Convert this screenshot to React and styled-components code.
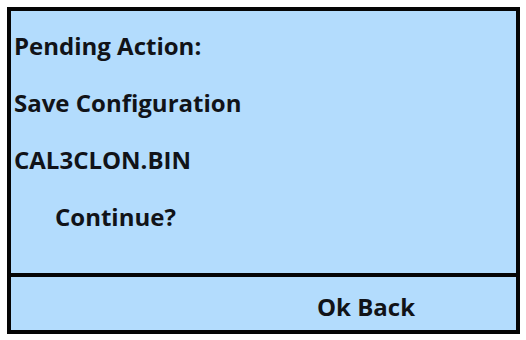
import React from 'react'
import styled, { createGlobalStyle } from 'styled-components'

const GlobalStyle = createGlobalStyle`
  html, body {
    margin: 0;
    padding: 0;
    background: #ffffff;
  }
  body {
    font-family: "Open Sans", Lato, sans-serif;
  }
`

const Page = styled.div`
  padding: 7px 6px 6px 7px;
`

const Screen = styled.div`
  width: 505px;
  border: 4px solid #050505;
  background: #b3dcfd;
  display: flex;
  flex-direction: column;
`

const Body = styled.div`
  height: 262px;
  padding: 19px 0 0 3px;
  box-sizing: border-box;
  display: flex;
  flex-direction: column;
  gap: 25px;
`

const Line = styled.div`
  font-size: 24px;
  font-weight: 700;
  line-height: 32px;
  color: #111318;
  padding-left: ${({ indent }) => indent || 0}px;
`

const Footer = styled.div`
  border-top: 4px solid #050505;
  display: flex;
  align-items: center;
  padding: 5px 0 0 306px;
  height: 48px;
  font-size: 24px;
  font-weight: 700;
  color: #111318;
`

const App = () => (
  <>
    <GlobalStyle />
    <Page>
      <Screen>
        <Body>
          <Line>Pending Action:</Line>
          <Line>Save Configuration</Line>
          <Line>CAL3CLON.BIN</Line>
          <Line indent={41}>Continue?</Line>
        </Body>
        <Footer>Ok Back</Footer>
      </Screen>
    </Page>
  </>
)

export default App
